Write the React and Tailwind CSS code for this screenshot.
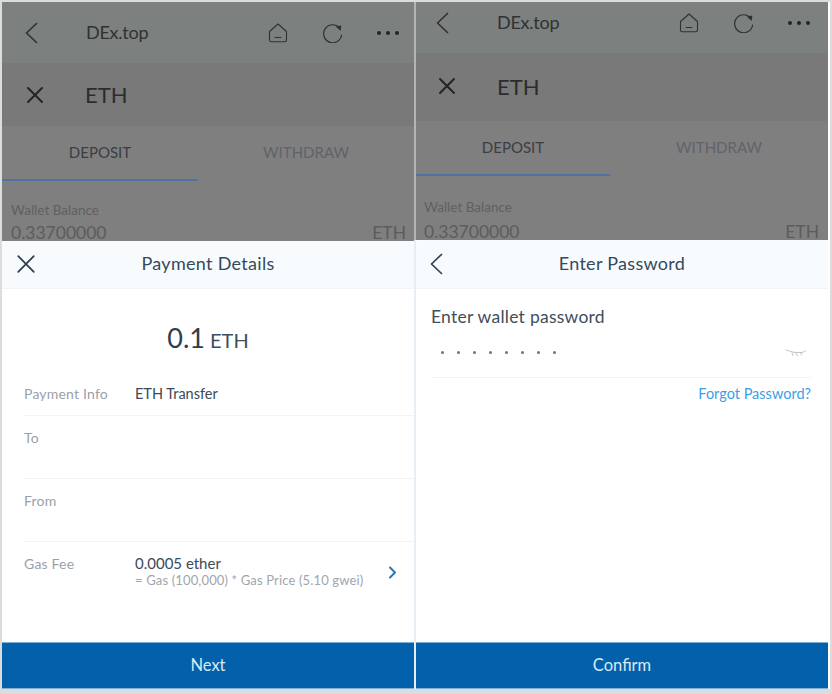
const FONT = "font-['Lato','Noto_Sans',sans-serif]";

function Back({ className = "" }) {
  return (
    <svg className={className} width="13" height="22" viewBox="0 0 13 22" fill="none" stroke="currentColor" strokeWidth="1.7" strokeLinecap="round" strokeLinejoin="round">
      <path d="M11.5 1.5 L1.5 11 L11.5 20.5" />
    </svg>
  );
}

function Close({ size = 18, width = 2 }) {
  return (
    <svg width={size} height={size} viewBox="0 0 18 18" fill="none" stroke="currentColor" strokeWidth={width} strokeLinecap="round">
      <path d="M2 2 L16 16 M16 2 L2 16" />
    </svg>
  );
}

function Home() {
  return (
    <svg width="20" height="20" viewBox="0 0 20 20" fill="none" stroke="#2f3231" strokeWidth="1.1" strokeLinejoin="round" strokeLinecap="round">
      <path d="M1.5 8.5 L10 1 L18.5 8.5 V17 Q18.5 18.8 16.8 18.8 H3.2 Q1.5 18.8 1.5 17 Z" />
      <path d="M7 14.5 H13" />
    </svg>
  );
}

function Reload() {
  return (
    <svg width="20" height="20" viewBox="0 0 20 20" fill="none">
      <path d="M16.6 5 A9 9 0 1 0 18.6 12" stroke="#2f3231" strokeWidth="1.2" strokeLinecap="round" />
      <path d="M12.8 3.6 L18.4 2.6 L17.6 8 Z" fill="#2f3231" />
    </svg>
  );
}

function Dots() {
  return (
    <div className="flex gap-[5px]">
      <span className="w-[4px] h-[4px] rounded-full bg-[#232524]" />
      <span className="w-[4px] h-[4px] rounded-full bg-[#232524]" />
      <span className="w-[4px] h-[4px] rounded-full bg-[#232524]" />
    </div>
  );
}

function Backdrop({ height, topClass, secondClass, pl, titleGap, tabW, balanceClass, padX, amountGap }) {
  return (
    <div className={`${height} overflow-hidden bg-[#7f7f7f] shrink-0`}>
      <div className={`${topClass} bg-[#7c807e] flex items-center ${pl} text-[#303231]`}>
        <Back />
        <span className="ml-[48px] text-[18px] tracking-[-0.25px] text-[#303231]">DEx.top</span>
        <div className="ml-auto flex items-center">
          <Home />
          <span className="ml-[35px]"><Reload /></span>
          <span className="ml-[34px]"><Dots /></span>
        </div>
      </div>
      <div className={`${secondClass} bg-[#797979] flex items-center ${titleGap} text-[#232524]`}>
        <Close size={18} width={2} />
        <span className="ml-[41px] text-[22px] text-[#2b2d2c]">ETH</span>
      </div>
      <div className="h-[55px] relative flex items-center text-[15px] pb-[2px]">
        <div className={`${tabW} text-center text-[#3a3d46]`}>DEPOSIT</div>
        <div className="flex-1 text-center text-[#60636b]">WITHDRAW</div>
        <div className={`absolute left-0 bottom-0 ${tabW} h-[2px] bg-[#5271a3]`} />
      </div>
      <div className={`${padX} ${balanceClass}`}>
        <div className="text-[13.5px] leading-[16px] text-[#5f5f5f]">Wallet Balance</div>
        <div className={`flex justify-between text-[17.5px] leading-[22px] ${amountGap} text-[#5c5c5c]`}>
          <span>0.33700000</span>
          <span>ETH</span>
        </div>
      </div>
    </div>
  );
}

function Row({ label, children, className = "" }) {
  return (
    <div className={`flex border-b border-[#f2f3f4] ${className}`}>
      <div className="w-[111px] text-[14px] leading-[20px] text-[#9aa1a8] tracking-[0.2px]">{label}</div>
      <div className="flex-1">{children}</div>
    </div>
  );
}

function SheetHeader({ icon, title, height, iconPos }) {
  return (
    <div className={`relative ${height} shrink-0 bg-[#f8fbfe] border-b border-[#f1f3f6] rounded-t-[4px] flex items-center justify-center pb-[2px] text-[#34495a]`}>
      <div className={`absolute ${iconPos} text-[#2f3f4e]`}>{icon}</div>
      <span className="text-[18px] tracking-[0.3px]">{title}</span>
    </div>
  );
}

function PayButton({ children, className = "" }) {
  return (
    <div className={`h-[47px] shrink-0 bg-[#0361ac] border-y border-[#7fb0d8] flex items-center justify-center text-[16.5px] text-[#dbe8f3] ${className}`}>
      {children}
    </div>
  );
}

export default function App() {
  return (
    <div className={`w-[832px] h-[694px] bg-[#dcdcdc] pt-[2px] pl-[2px] ${FONT}`}>
      <div className="flex h-[687px] w-[828px] bg-white">
        <div className="w-[412px] flex flex-col bg-white">
          <Backdrop
            height="h-[239px]"
            topClass="h-[61px] pr-[15px]"
            secondClass="h-[63px]"
            pl="pl-[23px]"
            titleGap="pl-[24px]"
            tabW="w-[196px]"
            padX="pl-[9px] pr-[8px]"
            balanceClass="pt-[21px]"
            amountGap="mt-[4px]"
          />
          <SheetHeader icon={<Close size={20} width={1.6} />} title="Payment Details" height="h-[48px]" iconPos="left-[14px] top-[13px]" />
          <div className="flex-1 flex flex-col bg-white">
            <div className="h-[95px] flex items-baseline justify-center pt-[27px] text-[#2b3f50]">
              <span className="text-[27px] leading-[44px]">0.1</span>
              <span className="ml-[5px] text-[20px] text-[#3b4f60]">ETH</span>
            </div>
            <div className="pl-[22px] flex flex-col">
              <Row label="Payment Info" className="h-[32px]">
                <div className="text-[14.5px] leading-[20px] text-[#3c4a57]">ETH Transfer</div>
              </Row>
              <Row label="To" className="h-[63px] pt-[12px]" />
              <Row label="From" className="h-[63px] pt-[12px]" />
              <div className="flex pt-[12px]">
                <div className="w-[111px] text-[14px] leading-[20px] text-[#9aa1a8] tracking-[0.2px]">Gas Fee</div>
                <div>
                  <div className="text-[15px] leading-[18px] text-[#3c4a57]">0.0005 ether</div>
                  <div className="text-[13px] leading-[16px] text-[#a0a6ac] tracking-[0.15px]">= Gas (100,000) * Gas Price (5.10 gwei)</div>
                </div>
                <svg className="ml-[25px] mt-[12px]" width="9" height="13" viewBox="0 0 9 13" fill="none" stroke="#2776b6" strokeWidth="2" strokeLinecap="round" strokeLinejoin="round">
                  <path d="M2 1.5 L7 6.5 L2 11.5" />
                </svg>
              </div>
            </div>
            <div className="flex-1" />
          </div>
          <PayButton>Next</PayButton>
        </div>

        <div className="w-[2px] flex flex-col">
          <div className="h-[238px] bg-[#b4b4b4]" />
          <div className="flex-1 bg-[#e6edf3]" />
        </div>

        <div className="w-[412px] flex flex-col bg-white">
          <Backdrop
            height="h-[238px]"
            topClass="h-[51px] pb-[10px] pr-[18px]"
            secondClass="h-[68px] pb-[2px]"
            pl="pl-[20px]"
            titleGap="pl-[22px]"
            tabW="w-[194px]"
            padX="pl-[8px] pr-[9px]"
            balanceClass="pt-[23px]"
            amountGap="mt-[6px]"
          />
          <SheetHeader icon={<Back />} title="Enter Password" height="h-[49px]" iconPos="left-[14px] top-[13px]" />
          <div className="flex-1 flex flex-col bg-white pl-[15px] pr-[17px]">
            <div className="mt-[17px] text-[17.5px] leading-[22px] text-[#3f4e5b] tracking-[0.25px]">Enter wallet password</div>
            <div className="h-[40px] flex items-center border-b border-[#f2f3f4] pl-[10px] pr-[4px] pb-[10px] mt-[10px]">
              <div className="flex gap-[13px]">
                {[0, 1, 2, 3, 4, 5, 6, 7].map((i) => (
                  <span key={i} className="w-[3px] h-[3px] rounded-full bg-[#6b7580]" />
                ))}
              </div>
              <svg className="ml-auto" width="22" height="8" viewBox="0 0 22 8" fill="none" stroke="#bfc3c7" strokeWidth="1" strokeLinecap="round">
                <path d="M1 1 Q9 4.5 17 3.5 Q20 2.8 21 1.5 M7 3.8 L8 6.5 M11 4 L12.5 6.8 M15 3.6 L17 6.2" />
              </svg>
            </div>
            <div className="mt-[6px] text-right text-[14.5px] leading-[20px] text-[#3a9fe6]">Forgot Password?</div>
            <div className="flex-1" />
          </div>
          <PayButton>Confirm</PayButton>
        </div>
      </div>
    </div>
  );
}
